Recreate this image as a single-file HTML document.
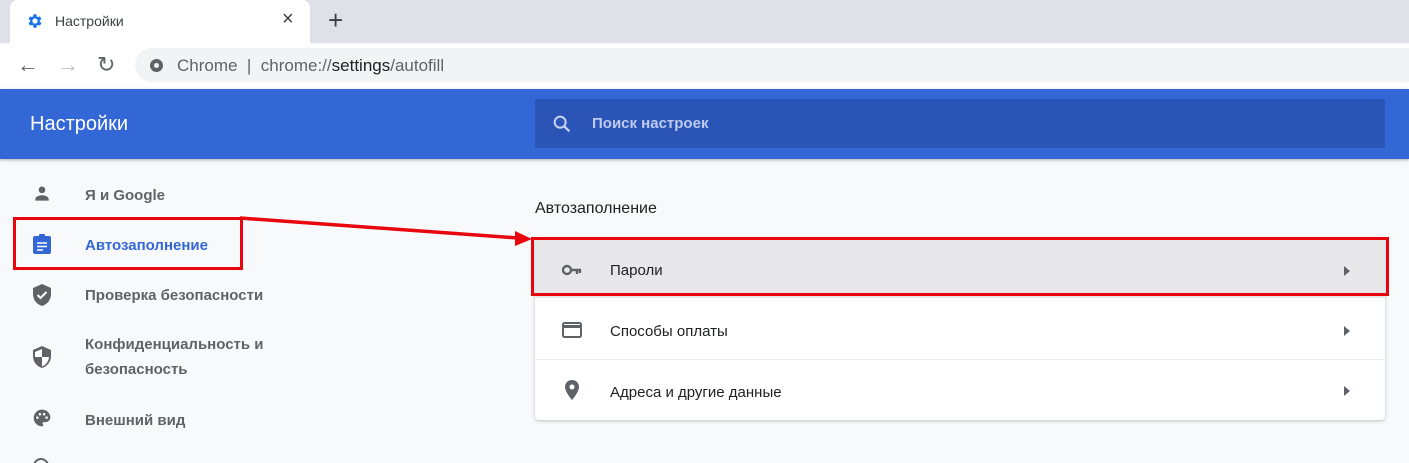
<!DOCTYPE html><html><head><meta charset="utf-8"><style>
*{margin:0;padding:0;box-sizing:border-box}
html,body{width:1409px;height:463px;overflow:hidden}
body{background:#f8f9fa;font-family:"Liberation Sans","DejaVu Sans",sans-serif;position:relative}
.a{position:absolute}
.side{font-size:15px;color:#5f6368;font-weight:bold;left:85px}
.ic{left:32px}
.row{position:absolute;left:0;width:850px;height:60px;border-top:1px solid #e8eaed}
.row span{position:absolute;left:75px;top:24px;font-size:15px;color:#202124}
.row svg{position:absolute}
</style></head><body>
<div class="a" style="left:0;top:0;width:1409px;height:43px;background:#dee1e6"></div>
<div class="a" style="left:10px;top:0;width:300px;height:44px;background:#fff;border-radius:8px 8px 0 0"></div>
<svg class="a" style="left:26px;top:12px" width="18" height="18" viewBox="0 0 24 24"><path fill="#1a73e8" d="M19.4 13a7.5 7.5 0 000-2l2.1-1.6-2-3.5-2.5 1a7 7 0 00-1.7-1L15 3h-4l-.4 2.9a7 7 0 00-1.7 1l-2.5-1-2 3.5L6.5 11a7.5 7.5 0 000 2l-2.1 1.6 2 3.5 2.5-1c.5.4 1.1.8 1.7 1L11 21h4l.4-2.9c.6-.3 1.2-.6 1.7-1l2.5 1 2-3.5zM13 15.5a3.5 3.5 0 110-7 3.5 3.5 0 010 7z" transform="translate(-1 0)"/></svg>
<div class="a" style="left:55px;top:13px;font-size:14px;color:#3c4043">Настройки</div>
<div class="a" style="left:282px;top:8px;font-size:20px;color:#3c4043">×</div>
<div class="a" style="left:328px;top:5px;font-size:26px;color:#3c4043">+</div>
<div class="a" style="left:0;top:44px;width:1409px;height:45px;background:#fff"></div>
<div class="a" style="left:17px;top:52px;font-size:22px;color:#5f6368">←</div>
<div class="a" style="left:57px;top:52px;font-size:22px;color:#bdc1c6">→</div>
<div class="a" style="left:97px;top:52px;font-size:22px;color:#5f6368">↻</div>
<div class="a" style="left:135px;top:48px;width:1300px;height:34px;background:#f1f3f4;border-radius:17px"></div>
<div class="a" style="left:150px;top:59px;width:13px;height:13px;border-radius:50%;background:#5f6368"><div class="a" style="left:4px;top:4px;width:5px;height:5px;border-radius:50%;background:#f1f3f4"></div></div>
<div class="a" style="left:177px;top:56px;font-size:17px;color:#5f6368">Chrome&nbsp;&nbsp;|&nbsp;&nbsp;chrome://<span style="color:#202124">settings</span>/autofill</div>
<div class="a" style="left:0;top:89px;width:1409px;height:70px;background:#3367d6;box-shadow:0 1px 3px rgba(0,0,0,.3)"></div>
<div class="a" style="left:30px;top:113px;font-size:20px;color:#fff">Настройки</div>
<div class="a" style="left:535px;top:99px;width:850px;height:49px;background:#2a54b6;border-radius:2px"></div>
<svg class="a" style="left:551px;top:113px" width="22" height="22" viewBox="0 0 24 24"><circle cx="10" cy="10" r="6" fill="none" stroke="#c6d3f2" stroke-width="2.2"/><path d="M14.5 14.5L20 20" stroke="#c6d3f2" stroke-width="2.5"/></svg>
<div class="a" style="left:592px;top:115px;font-size:15px;font-weight:bold;color:#bccbef">Поиск настроек</div>

<svg class="a ic" style="top:184px" width="20" height="20" viewBox="0 0 24 24"><circle cx="12" cy="7" r="4" fill="#5f6368"/><path d="M4 20v-2c0-3 5-4.5 8-4.5s8 1.5 8 4.5v2z" fill="#5f6368"/></svg>
<div class="a side" style="top:187px">Я и Google</div>
<svg class="a ic" style="top:233px" width="20" height="22" viewBox="0 0 20 22"><rect x="1" y="3" width="18" height="18" rx="2" fill="#3367d6"/><rect x="7" y="1" width="6" height="4" rx="1" fill="#3367d6"/><path d="M5 10h10M5 13.5h10M5 17h6" stroke="#fff" stroke-width="1.6"/></svg>
<div class="a side" style="top:237px;color:#3367d6">Автозаполнение</div>
<svg class="a ic" style="top:283px" width="20" height="24" viewBox="0 0 20 24"><path d="M10 1L1 5v6c0 6 4 10.5 9 12 5-1.5 9-6 9-12V5z" fill="#5f6368"/><path d="M5.5 12l3 3 6-6" stroke="#fff" stroke-width="2" fill="none"/></svg>
<div class="a side" style="top:287px">Проверка безопасности</div>
<svg class="a ic" style="top:345px" width="20" height="24" viewBox="0 0 20 24"><path d="M10 1L1 5v6c0 6 4 10.5 9 12 5-1.5 9-6 9-12V5z" fill="#5f6368"/><path d="M10 4v8h7c-.3 4-3 8-7 9.5z" fill="#fff"/><path d="M10 4L3 7v5h7z" fill="#fff"/></svg>
<div class="a side" style="top:332px;line-height:25px">Конфиденциальность и<br>безопасность</div>
<svg class="a ic" style="top:408px" width="20" height="20" viewBox="0 0 24 24"><path d="M12 2C6.5 2 2 6.5 2 12s4.5 10 10 10c1 0 1.5-.7 1.5-1.5 0-.4-.2-.7-.4-1-.2-.3-.4-.6-.4-1 0-.8.7-1.5 1.5-1.5H16c3 0 6-2.5 6-5.5C22 6 17.5 2 12 2z" fill="#5f6368"/><circle cx="6.5" cy="11.5" r="1.5" fill="#fff"/><circle cx="9.5" cy="7.5" r="1.5" fill="#fff"/><circle cx="14.5" cy="7.5" r="1.5" fill="#fff"/><circle cx="17.5" cy="11.5" r="1.5" fill="#fff"/></svg>
<div class="a side" style="top:412px">Внешний вид</div>
<div class="a" style="left:33px;top:458px;width:16px;height:16px;border-radius:50%;border:2px solid #5f6368"></div>

<div class="a" style="left:535px;top:200px;font-size:16px;color:#202124">Автозаполнение</div>
<div class="a" style="left:535px;top:238px;width:850px;height:182px;background:#fff;border-radius:4px;box-shadow:0 1px 3px rgba(60,64,67,.3)">
 <div class="row" style="top:0;border:none;background:#e8e8eb;border-radius:4px 4px 0 0"><svg style="left:27px;top:26px" width="20" height="12" viewBox="0 0 20 12"><circle cx="5" cy="6" r="4" fill="none" stroke="#5f6368" stroke-width="2.4"/><path d="M9 6h10M15 6v4M18 6v3" stroke="#5f6368" stroke-width="2.4"/></svg><span>Пароли</span></div>
 <div class="row" style="top:62px;border:none"><svg style="left:27px;top:22px" width="20" height="16" viewBox="0 0 20 16"><rect x="1" y="1" width="18" height="14" rx="1.5" fill="none" stroke="#5f6368" stroke-width="2"/><rect x="1" y="3" width="18" height="3" fill="#5f6368"/></svg><span style="top:23px">Способы оплаты</span></div>
 <div class="row" style="top:121px"><svg style="left:29px;top:19px" width="16" height="22" viewBox="0 0 16 22"><path d="M8 1C4 1 1 4 1 8c0 5 7 13 7 13s7-8 7-13c0-4-3-7-7-7z" fill="#5f6368"/><circle cx="8" cy="8" r="2.5" fill="#fff"/></svg><span>Адреса и другие данные</span></div>
 <svg class="a" style="left:809px;top:28px" width="6" height="10"><path d="M0 0l6 5-6 5z" fill="#5f6368"/></svg>
 <svg class="a" style="left:809px;top:88px" width="6" height="10"><path d="M0 0l6 5-6 5z" fill="#5f6368"/></svg>
 <svg class="a" style="left:809px;top:148px" width="6" height="10"><path d="M0 0l6 5-6 5z" fill="#5f6368"/></svg>
</div>

<div class="a" style="left:13px;top:217px;width:230px;height:53px;border:3.5px solid #e8050d"></div>
<div class="a" style="left:531px;top:237px;width:858px;height:59px;border:3.5px solid #e8050d"></div>
<svg class="a" style="left:0;top:0" width="1409" height="463"><path d="M240 218L518 238" stroke="#e8050d" stroke-width="3.5"/><path d="M532 239L515 231L515 246z" fill="#e8050d"/></svg>
</body></html>
